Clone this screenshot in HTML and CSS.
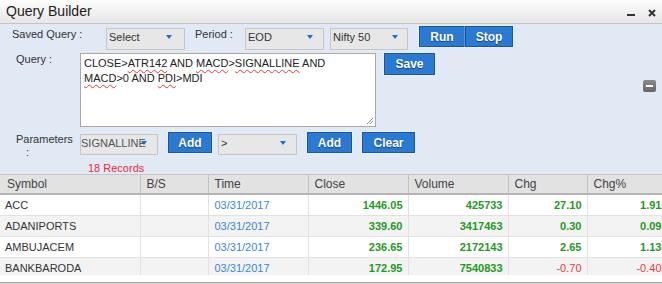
FILE: index.html
```html
<!DOCTYPE html>
<html>
<head>
<meta charset="utf-8">
<link rel="stylesheet" href="styles.css">
</head>
<body>
<div class="win">
  <div class="titlebar">
    <span class="title">Query Builder</span>
    <span class="tb-min"></span>
    <svg class="tb-close" width="8" height="8" viewBox="0 0 8 8"><path d="M1 1L7 7M7 1L1 7" stroke="#333" stroke-width="2"/></svg>
  </div>
  <div class="panel">
    <div class="row r1">
      <span class="lbl lbl-saved">Saved Query :</span>
      <div class="dd dd-select">Select<i class="caret"></i></div>
      <span class="lbl lbl-period">Period :</span>
      <div class="dd dd-eod">EOD<i class="caret"></i></div>
      <div class="dd dd-nifty">Nifty 50<i class="caret"></i></div>
      <div class="btn-group"><span class="btn btn-run">Run</span><span class="btn btn-stop">Stop</span></div>
    </div>
    <div class="row r2">
      <span class="lbl lbl-query">Query :</span>
      <div class="ta">CLOSE&gt;<span class="sp">ATR142</span> AND <span class="sp">MACD</span>&gt;<span class="sp">SIGNALLINE</span> AND<br><span class="sp">MACD</span>&gt;0 AND <span class="sp">PDI</span>&gt;MDI<svg class="grip" width="8" height="8" viewBox="0 0 8 8"><path d="M7 1L1 7M7 4L4 7" stroke="#888" stroke-width="1"/></svg></div>
      <span class="btn btn-save">Save</span>
      <span class="collapse"><i></i></span>
    </div>
    <div class="row r3">
      <span class="lbl lbl-params">Parameters<br><span class="colon">:</span></span>
      <div class="dd dd-param">SIGNALLINE<i class="caret"></i></div>
      <span class="btn btn-add">Add</span>
      <div class="dd dd-op">&gt;<i class="caret"></i></div>
      <span class="btn btn-add2">Add</span>
      <span class="btn btn-clear">Clear</span>
    </div>
    <div class="records">18 Records</div>
  </div>
  <div class="grid">
    <table>
      <colgroup>
        <col class="c-sym"><col class="c-bs"><col class="c-time"><col class="c-close"><col class="c-vol"><col class="c-chg"><col class="c-pct">
      </colgroup>
      <thead>
        <tr><th>Symbol</th><th>B/S</th><th>Time</th><th>Close</th><th>Volume</th><th>Chg</th><th>Chg%</th></tr>
      </thead>
      <tbody>
        <tr><td class="sym">ACC</td><td></td><td class="time">03/31/2017</td><td class="num up">1446.05</td><td class="num up">425733</td><td class="num up">27.10</td><td class="num up">1.91</td></tr>
        <tr class="alt"><td class="sym">ADANIPORTS</td><td></td><td class="time">03/31/2017</td><td class="num up">339.60</td><td class="num up">3417463</td><td class="num up">0.30</td><td class="num up">0.09</td></tr>
        <tr><td class="sym">AMBUJACEM</td><td></td><td class="time">03/31/2017</td><td class="num up">236.65</td><td class="num up">2172143</td><td class="num up">2.65</td><td class="num up">1.13</td></tr>
        <tr class="alt"><td class="sym">BANKBARODA</td><td></td><td class="time">03/31/2017</td><td class="num up">172.95</td><td class="num up">7540833</td><td class="num down">-0.70</td><td class="num down">-0.40</td></tr>
      </tbody>
    </table>
  </div>
  <div class="grid-foot"></div>
</div>
</body>
</html>
```

FILE: styles.css
```css
html, body {
  margin: 0;
  padding: 0;
  background: #d8d0c2;
}
body {
  font-family: "Liberation Sans", Arial, sans-serif;
  font-size: 11px;
  color: #333;
}
.win {
  width: 662px;
  height: 283px;
  overflow: hidden;
  background: #fff;
}
.titlebar {
  height: 23px;
  border-bottom: 1px solid #c4c4c4;
  background: linear-gradient(#fdfdfd, #e6e6e6);
  display: flex;
  align-items: flex-start;
}
.title {
  font-size: 14px;
  line-height: 23px;
  padding-left: 6px;
  color: #222;
}
.tb-min {
  margin-left: auto;
  margin-top: 14px;
  width: 8px;
  height: 2px;
  background: #333;
}
.tb-close {
  margin-left: 13px;
  margin-right: 6px;
  margin-top: 9px;
}
.panel {
  height: 150px;
  overflow: hidden;
  background: #e0e9f4;
}
.row {
  display: flex;
  align-items: flex-start;
}
.r1 { height: 27px; }
.r2 { height: 78px; }
.r3 { height: 29px; }
.lbl {
  line-height: 13px;
  color: #333;
}
.lbl-saved { margin: 4px 0 0 12px; width: 94px; }
.lbl-period { margin: 4px 0 0 10px; width: 50px; }
.lbl-query { margin: 2px 0 0 16px; width: 64px; }
.lbl-params { margin: 4px 0 0 16px; width: 64px; }
.colon { padding-left: 10px; }

.dd {
  position: relative;
  box-sizing: border-box;
  height: 22px;
  border: 1px solid #c6c6c6;
  background: #e7e7e7;
  padding-left: 2px;
  line-height: 17px;
  color: #333;
  white-space: nowrap;
  overflow: hidden;
}
.caret {
  position: absolute;
  left: 59px;
  top: 6px;
  width: 0;
  height: 0;
  border-left: 3px solid transparent;
  border-right: 3px solid transparent;
  border-top: 4px solid #1b6fd0;
}
.dd-select { width: 79px; margin-top: 4px; }
.dd-eod { width: 79px; margin-top: 4px; }
.dd-nifty { width: 78px; margin-top: 4px; margin-left: 6px; }
.dd-eod .caret, .dd-nifty .caret { left: 61px; }
.dd-param { width: 78px; height: 21px; margin-top: 5px; color: #555; padding-left: 0; }
.dd-op { width: 79px; height: 21px; margin-top: 5px; margin-left: 6px; }
.dd-param .caret { left: 60px; }
.dd-op .caret { left: 61px; }

.btn {
  box-sizing: border-box;
  display: flex;
  align-items: center;
  justify-content: center;
  height: 21px;
  background: #2a79d3;
  border: 1px solid #1a56a2;
  color: #fff;
  font-weight: bold;
  font-size: 12px;
  text-shadow: 0 1px 1px rgba(0, 0, 0, 0.45);
  box-shadow: 0 0 0 1px rgba(255, 255, 255, 0.35);
}
.btn-group {
  display: flex;
  margin: 2px 0 0 11px;
}
.btn-run { width: 46px; }
.btn-stop { width: 48px; border-left: 1px solid #174e94; }
.ta {
  position: relative;
  box-sizing: border-box;
  width: 296px;
  height: 74px;
  margin-top: 2px;
  border: 1px solid #a8a8a8;
  background: #fff;
  padding: 2px 3px;
  line-height: 15px;
  color: #222;
}
.sp {
  text-decoration: underline wavy #e23a3a;
  text-decoration-thickness: 1px;
  text-underline-offset: 2px;
}
.grip {
  position: absolute;
  right: 1px;
  bottom: 1px;
}
.btn-save { width: 51px; height: 22px; margin: 2px 0 0 8px; }
.collapse {
  margin: 29px 6px 0 auto;
  width: 13px;
  height: 12px;
  border-radius: 2px;
  background: linear-gradient(#8a8a8a, #666);
  display: flex;
  align-items: center;
  justify-content: center;
}
.collapse i {
  width: 7px;
  height: 2px;
  background: #fff;
}
.btn-add { width: 44px; margin: 3px 0 0 10px; }
.btn-add2 { width: 45px; margin: 3px 0 0 10px; }
.btn-clear { width: 53px; margin: 3px 0 0 10px; }
.records {
  margin-top: 4px;
  padding-left: 88px;
  line-height: 13px;
  color: #ee2a3a;
}

.grid {
  height: 100px;
  overflow: hidden;
  border-top: 1px solid #c4c4c4;
  background: #fff;
}
table {
  table-layout: fixed;
  width: 667px;
  border-collapse: collapse;
}
.c-sym { width: 140px; }
.c-bs { width: 68px; }
.c-time { width: 100px; }
.c-close { width: 100px; }
.c-vol { width: 100px; }
.c-chg { width: 79px; }
.c-pct { width: 80px; }
th {
  height: 18px;
  padding: 0 0 0 6px;
  background: #e2e2e2;
  border-right: 1px solid #c2c2c2;
  border-bottom: 2px solid #b4b4b4;
  text-align: left;
  font-weight: normal;
  font-size: 12px;
  color: #444;
}
th:first-child { padding-left: 7px; }
td {
  height: 20px;
  padding: 0 6px;
  border-right: 1px solid #e2e2e2;
  border-bottom: 1px solid #e2e2e2;
  color: #333;
  white-space: nowrap;
}
td.sym { padding-left: 5px; }
tr.alt td { background: #f3f3f3; }
td.time { color: #3a86d8; }
td.num { text-align: right; padding-right: 5px; }
td.up { color: #1f9a1f; font-weight: bold; }
td.down { color: #ef3a3a; }
.grid-foot {
  height: 7px;
  border-bottom: 1px solid #a8a8a8;
  background: #fff;
}
```
